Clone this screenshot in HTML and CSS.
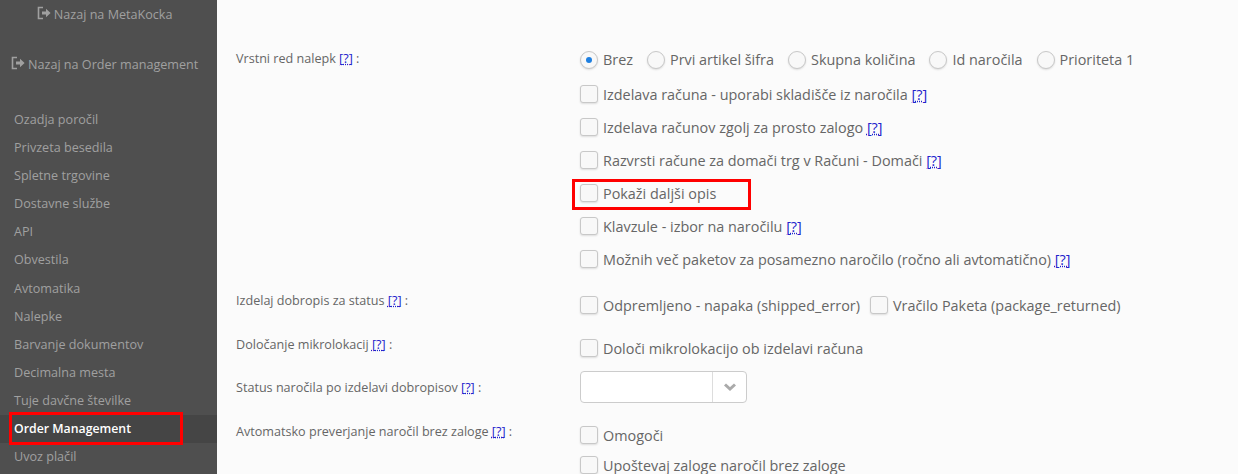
FILE: index.html
```html
<!DOCTYPE html>
<html lang="sl">
<head>
  <meta charset="UTF-8">
  <title>Nastavitve</title>
  <link rel="stylesheet" href="styles.css">
</head>
<body>
  <svg class="defs" width="0" height="0">
    <symbol id="back" viewBox="0 0 14 14">
      <path d="M6 1.5H1.5v11H6" fill="none" stroke="currentColor" stroke-width="1.6"/>
      <path d="M5 5.5h4V2.8L13.6 7 9 11.2V8.5H5z" fill="currentColor"/>
    </symbol>
  </svg>
  <div class="layout">
    <aside class="sidebar">
      <a class="back back-first"><svg class="back-icon"><use href="#back"/></svg> Nazaj na MetaKocka</a>
      <a class="back back-second"><svg class="back-icon"><use href="#back"/></svg> Nazaj na Order management</a>
      <nav class="menu">
        <a>Ozadja poročil</a>
        <a>Privzeta besedila</a>
        <a>Spletne trgovine</a>
        <a>Dostavne službe</a>
        <a>API</a>
        <a>Obvestila</a>
        <a>Avtomatika</a>
        <a>Nalepke</a>
        <a>Barvanje dokumentov</a>
        <a>Decimalna mesta</a>
        <a>Tuje davčne številke</a>
        <a class="active">Order Management<span class="mark mark-menu"></span></a>
        <a>Uvoz plačil</a>
      </nav>
    </aside>
    <main class="content">
      <div class="row row-labels">
        <div class="label">Vrstni red nalepk <a class="help">[?]</a> :</div>
        <div class="fields">
          <div class="radios">
            <span class="opt"><i class="radio on"></i>Brez</span>
            <span class="opt"><i class="radio"></i>Prvi artikel šifra</span>
            <span class="opt"><i class="radio"></i>Skupna količina</span>
            <span class="opt"><i class="radio"></i>Id naročila</span>
            <span class="opt"><i class="radio"></i>Prioriteta 1</span>
          </div>
          <div class="check"><i class="box"></i>Izdelava računa - uporabi skladišče iz naročila <a class="help">[?]</a></div>
          <div class="check"><i class="box"></i>Izdelava računov zgolj za prosto zalogo <a class="help">[?]</a></div>
          <div class="check"><i class="box"></i>Razvrsti račune za domači trg v Računi - Domači <a class="help">[?]</a></div>
          <div class="check"><i class="box"></i>Pokaži daljši opis<span class="mark mark-opis"></span></div>
          <div class="check"><i class="box"></i>Klavzule - izbor na naročilu <a class="help">[?]</a></div>
          <div class="check"><i class="box"></i>Možnih več paketov za posamezno naročilo (ročno ali avtomatično) <a class="help">[?]</a></div>
        </div>
      </div>
      <div class="row row-credit">
        <div class="label">Izdelaj dobropis za status <a class="help">[?]</a> :</div>
        <div class="inline">
          <span class="opt"><i class="box"></i>Odpremljeno - napaka (shipped_error)</span>
          <span class="opt"><i class="box"></i>Vračilo Paketa (package_returned)</span>
        </div>
      </div>
      <div class="row row-micro">
        <div class="label">Določanje mikrolokacij <a class="help">[?]</a> :</div>
        <div class="check"><i class="box"></i>Določi mikrolokacijo ob izdelavi računa</div>
      </div>
      <div class="row row-status">
        <div class="label">Status naročila po izdelavi dobropisov <a class="help">[?]</a> :</div>
        <div class="select">
          <span class="select-arrow">
            <svg width="14" height="9" viewBox="0 0 14 9"><path d="M2 1.500 7 6l5-4.500" fill="none" stroke="#aaa" stroke-width="3"/></svg>
          </span>
        </div>
      </div>
      <div class="row row-auto">
        <div class="label">Avtomatsko preverjanje naročil brez zaloge <a class="help">[?]</a> :</div>
        <div class="fields">
          <div class="check"><i class="box"></i>Omogoči</div>
          <div class="check"><i class="box"></i>Upoštevaj zaloge naročil brez zaloge</div>
        </div>
      </div>
    </main>
  </div>
</body>
</html>
```

FILE: styles.css
```css
html, body {
  margin: 0;
  padding: 0;
  height: 474px;
  overflow: hidden;
}
body {
  background-color: #fbfbfb;
  color: #666;
  font-family: "Open Sans", sans-serif;
  font-size: 14.4px;
}
.defs {
  position: absolute;
}
.layout {
  display: flex;
  height: 474px;
}
.sidebar {
  width: 217px;
  flex: none;
  background-color: #4f4f4f;
  color: #a0a0a0;
  font-size: 12.6px;
}
.back {
  display: block;
  text-align: center;
  line-height: 18px;
  white-space: nowrap;
  padding-right: 8px;
}
.back-first {
  margin-top: 6px;
}
.back-second {
  margin-top: 32px;
}
.back-icon {
  width: 14px;
  height: 14px;
  vertical-align: -1px;
}
.menu {
  margin-top: 32px;
}
.menu a {
  display: block;
  position: relative;
  height: 28.1px;
  line-height: 28px;
  padding-left: 14px;
}
.menu .active {
  background-color: #454545;
  color: #fff;
  font-size: 12.3px;
  font-weight: 600;
}
.mark {
  position: absolute;
  border: 3px solid #f00;
  box-sizing: border-box;
}
.mark-menu {
  left: 9px;
  top: -3px;
  width: 174px;
  height: 33px;
}
.mark-opis {
  left: -8px;
  top: -1px;
  width: 179px;
  height: 31px;
}
.content {
  flex: 1;
  padding-left: 19px;
}
.row {
  display: flex;
}
.row-labels {
  margin-top: 46px;
}
.row-credit {
  margin-top: 16px;
}
.row-micro {
  margin-top: 14px;
}
.row-status {
  margin-top: 14px;
}
.row-auto {
  margin-top: 16px;
}
.label {
  width: 344px;
  flex: none;
  font-size: 12.6px;
  line-height: 26px;
}
.help {
  color: #22c;
  text-decoration: underline dotted;
}
.fields {
  flex: 1;
}
.radios, .inline {
  display: flex;
  height: 26px;
  align-items: center;
}
.radios {
  height: 27px;
  gap: 14px;
}
.inline {
  gap: 10px;
  margin-top: 4px;
}
.radios + .check {
  margin-top: 8px;
}
.opt {
  display: inline-flex;
  align-items: center;
  white-space: nowrap;
}
.check {
  position: relative;
  display: flex;
  align-items: center;
  height: 26px;
  white-space: pre;
}
.check + .check {
  margin-top: 7px;
}
.row-micro .check {
  margin-top: 3px;
}
.row-auto .fields {
  margin-top: 3px;
}
.row-auto .check + .check {
  margin-top: 4px;
}
.box, .radio {
  flex: none;
  width: 16px;
  height: 16px;
  margin-right: 5px;
  background-color: #f8f8f8;
  border: 1px solid #c8c8c8;
  border-radius: 3px;
  box-shadow: 0 1px 2px rgba(0, 0, 0, 0.12);
}
.radio {
  border-radius: 50%;
  display: flex;
  align-items: center;
  justify-content: center;
}
.radio.on::after {
  content: "";
  width: 6px;
  height: 6px;
  border-radius: 50%;
  background-color: #1e7fe0;
}
.select {
  width: 165px;
  height: 30px;
  margin-top: -4px;
  display: flex;
  justify-content: flex-end;
  background-color: #fff;
  border: 1px solid #ccc;
  border-radius: 4px;
}
.select-arrow {
  width: 33px;
  border-left: 1px solid #ddd;
  display: flex;
  align-items: center;
  justify-content: center;
}
```
